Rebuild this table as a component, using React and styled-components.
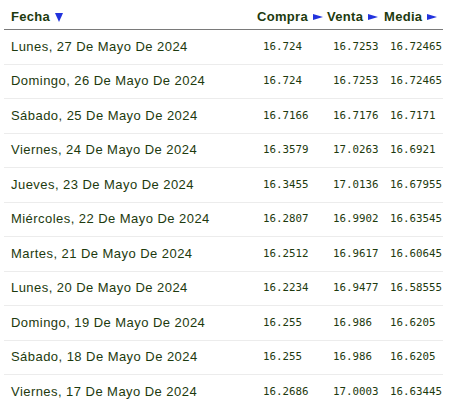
import React from "react";
import styled, { createGlobalStyle } from "styled-components";

const Global = createGlobalStyle`
  html, body { margin: 0; padding: 0; background: #fff; }
  body { font-family: "Liberation Sans", Arial, sans-serif; }
`;

const Wrap = styled.div`
  padding: 4px 0 0 4px;
`;

const Table = styled.table`
  width: 439px;
  border-collapse: collapse;
  table-layout: fixed;
  color: #1d3a0e;
`;

const Th = styled.th`
  text-align: left;
  font-size: 13px;
  font-weight: bold;
  letter-spacing: 0.3px;
  padding: 4px 0 5px 7px;
  height: 16px;
  border-bottom: 1px solid #7a7a7a;
  white-space: nowrap;
`;

const Arrow = styled.span`
  display: inline-block;
  margin-left: 5px;
  width: 0;
  height: 0;
  vertical-align: ${(p) => (p.$down ? "-1px" : "1px")};
  ${(p) =>
    p.$down
      ? `border-left: 4px solid transparent; border-right: 4px solid transparent; border-top: 9px solid #2233dd;`
      : `border-top: 3px solid transparent; border-bottom: 3px solid transparent; border-left: 10px solid #2233dd;`}
`;

const Row = styled.tr`
  border-bottom: 1px solid #ececec;
`;

const DateCell = styled.td`
  font-size: 13px;
  letter-spacing: 0.45px;
  line-height: 13.4px;
  padding: 9.5px 0 10.6px 7px;
  white-space: nowrap;
`;

const NumCell = styled.td`
  font-family: "DejaVu Sans Mono", "Liberation Mono", monospace;
  font-size: 10.8px;
  line-height: 13.4px;
  padding: 9.5px 0 10.6px ${(p) => p.$pad}px;
  white-space: nowrap;
`;

const data = [
  ["Lunes, 27 De Mayo De 2024", "16.724", "16.7253", "16.72465"],
  ["Domingo, 26 De Mayo De 2024", "16.724", "16.7253", "16.72465"],
  ["Sábado, 25 De Mayo De 2024", "16.7166", "16.7176", "16.7171"],
  ["Viernes, 24 De Mayo De 2024", "16.3579", "17.0263", "16.6921"],
  ["Jueves, 23 De Mayo De 2024", "16.3455", "17.0136", "16.67955"],
  ["Miércoles, 22 De Mayo De 2024", "16.2807", "16.9902", "16.63545"],
  ["Martes, 21 De Mayo De 2024", "16.2512", "16.9617", "16.60645"],
  ["Lunes, 20 De Mayo De 2024", "16.2234", "16.9477", "16.58555"],
  ["Domingo, 19 De Mayo De 2024", "16.255", "16.986", "16.6205"],
  ["Sábado, 18 De Mayo De 2024", "16.255", "16.986", "16.6205"],
  ["Viernes, 17 De Mayo De 2024", "16.2686", "17.0003", "16.63445"],
];

export default function App() {
  return (
    <>
      <Global />
      <Wrap>
        <Table>
          <colgroup>
            <col style={{ width: 246 }} />
            <col style={{ width: 70 }} />
            <col style={{ width: 57 }} />
            <col style={{ width: 66 }} />
          </colgroup>
          <thead>
            <tr>
              <Th>
                Fecha<Arrow $down />
              </Th>
              <Th>
                Compra<Arrow />
              </Th>
              <Th>
                Venta<Arrow />
              </Th>
              <Th>
                Media<Arrow />
              </Th>
            </tr>
          </thead>
          <tbody>
            {data.map((r) => (
              <Row key={r[0]}>
                <DateCell>{r[0]}</DateCell>
                <NumCell $pad={13}>{r[1]}</NumCell>
                <NumCell $pad={13}>{r[2]}</NumCell>
                <NumCell $pad={13}>{r[3]}</NumCell>
              </Row>
            ))}
          </tbody>
        </Table>
      </Wrap>
    </>
  );
}
